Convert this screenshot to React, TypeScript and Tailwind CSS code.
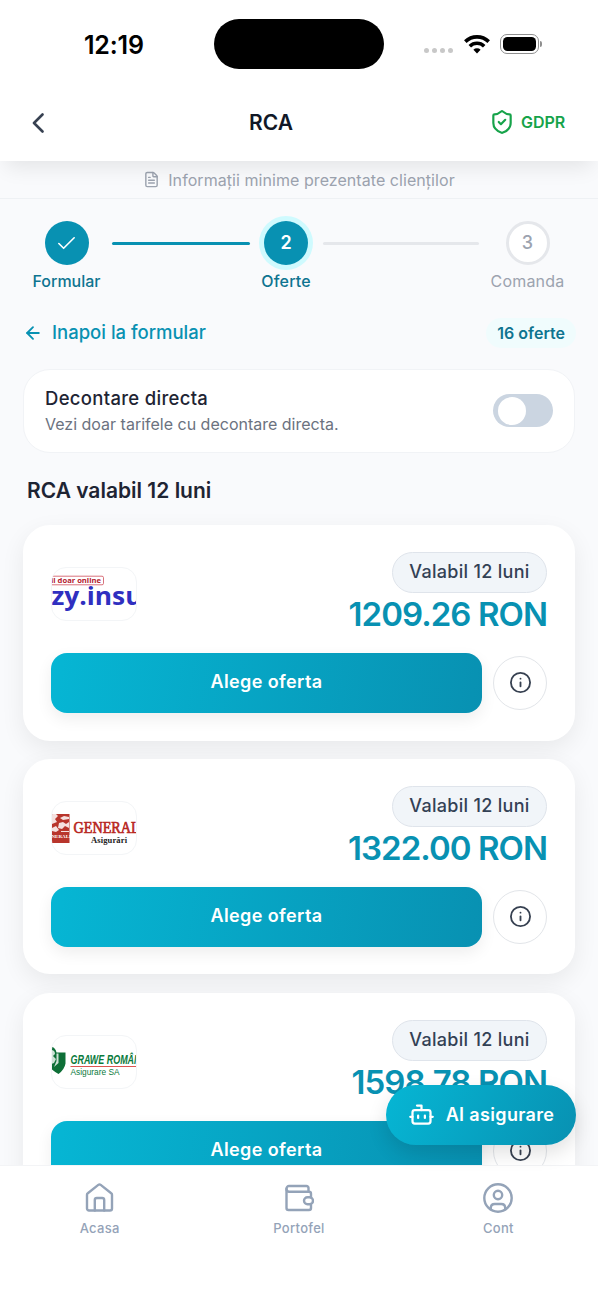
import type { ReactNode } from "react";
import { ArrowLeft, Bot, Check, FileText, Info, ShieldCheck } from "lucide-react";

type Offer = {
  id: string;
  price: string;
  logo: ReactNode;
};

function EazyLogo() {
  return (
    <svg viewBox="0 0 84 52" className="h-full w-full">
      <rect x="-20" y="8.200" width="71.500" height="8.600" rx="1.500" fill="#fff" stroke="#d4626c" strokeWidth="0.9" />
      <text x="-1" y="15.200" fontSize="7.400" fontWeight="700" fill="#b3202e" fontFamily="Open Sans, sans-serif" textLength="50" lengthAdjust="spacingAndGlyphs">
        il doar online
      </text>
      <text x="-0.500" y="37" fontSize="25" fontWeight="700" fill="#2f2fc0" fontFamily="Open Sans, sans-serif" textLength="91" lengthAdjust="spacingAndGlyphs">
        zy.insu
      </text>
    </svg>
  );
}

function GeneraliLogo() {
  return (
    <svg viewBox="0 0 84 52" className="h-full w-full">
      <rect x="0" y="12" width="17.500" height="29" fill="#b8352c" />
      <path
        d="M0 12h4l2 2-3 3 2 3-5 2zM8 16l4-2 5 1v2l-6 1zM7 21l4-1 3 2 3-2v6l-4-2-3 3-4-1zM0 26l4-2 3 4-3 2-4-1zM9 29h8v1H9z"
        fill="#fff"
        opacity="0.85"
      />
      <text x="-0.500" y="36" fontSize="5" fontWeight="700" fill="#fff" fontFamily="Liberation Serif, serif">
        NERALI
      </text>
      <text x="21.500" y="31" fontSize="17.500" fill="#b8271f" stroke="#b8271f" strokeWidth="0.7" fontFamily="Liberation Serif, serif" textLength="71" lengthAdjust="spacingAndGlyphs">
        GENERALI
      </text>
      <text x="39" y="41" fontSize="8.500" fontWeight="700" fill="#222" fontFamily="Liberation Serif, serif" textLength="36">
        Asigurări
      </text>
    </svg>
  );
}

function GraweLogo() {
  return (
    <svg viewBox="0 0 84 52" className="h-full w-full">
      <path d="M-2 11q5-1 6.500 5.500H13.500v11q-1 6-7 10.500-5-3-8-6z" fill="#0e6f37" />
      <path d="M-1 14q4 0 4 4l-2 2 3 3-2 4-3 1zM4.500 17.500V25l-2.500 6 4.500-4v-9.500z" fill="#fff" opacity="0.8" />
      <text x="18.500" y="28" fontSize="12" fontWeight="700" fontStyle="italic" fill="#0a7a3c" fontFamily="Liberation Sans, sans-serif" textLength="70" lengthAdjust="spacingAndGlyphs">
        GRAWE ROMÂN
      </text>
      <rect x="18.500" y="30" width="70" height="0.9" fill="#d8423e" />
      <text x="18.500" y="38.500" fontSize="9" fill="#0a7a3c" fontFamily="Liberation Sans, sans-serif" textLength="49" lengthAdjust="spacingAndGlyphs">
        Asigurare SA
      </text>
    </svg>
  );
}

const offers: Offer[] = [
  { id: "eazy", price: "1209.26 RON", logo: <EazyLogo /> },
  { id: "generali", price: "1322.00 RON", logo: <GeneraliLogo /> },
  { id: "grawe", price: "1598.78 RON", logo: <GraweLogo /> },
];

function StatusBar() {
  return (
    <div className="flex h-[84px] shrink-0 items-start">
      <div className="flex h-[90px] w-[214px] items-center pl-[84px]">
        <span className="text-[25px] leading-6 font-semibold tracking-[-0.2px] text-black">12:19</span>
      </div>
      <div className="mt-[19px] h-[50px] w-[170px] rounded-full bg-black" />
      <div className="flex h-[88px] items-center pl-10">
        <div className="mt-3 flex gap-[3px]">
          {[0, 1, 2, 3].map((dot) => (
            <span key={dot} className="size-[5px] rounded-full bg-[#c8c8c8]" />
          ))}
        </div>
        <svg viewBox="0 0 26 20" className="ml-[11px] h-5 w-[26px]" fill="none" stroke="#000" strokeWidth="3.600">
          <path d="M1.300 7.600a16.800 16.800 0 0 1 23.400 0" />
          <path d="M5.800 12.200a10.400 10.400 0 0 1 14.400 0" />
          <path d="M13 19.500l-3.600-3.700a5.200 5.200 0 0 1 7.200 0z" fill="#000" stroke="none" />
        </svg>
        <div className="ml-[10px] h-[20px] w-[39px] rounded-[7px] border border-[#8f8f8f] p-[2px]">
          <div className="h-full w-full rounded-[4.500px] bg-black" />
        </div>
        <span className="ml-px h-[6px] w-[2px] rounded-r-full bg-[#8f8f8f]" />
      </div>
    </div>
  );
}

function Header() {
  return (
    <header className="relative z-10 shrink-0 bg-white shadow-[0_12px_20px_-6px_rgba(0,0,0,0.09)]">
      <StatusBar />
      <div className="flex h-[77px] items-center justify-between pr-[33px] pl-[32px]">
        <button type="button" className="flex w-[35px]" aria-label="Inapoi">
          <svg viewBox="0 0 13 20" className="h-5 w-[13px]" fill="none" stroke="#374151" strokeWidth="2.600" strokeLinecap="round" strokeLinejoin="round">
            <path d="M10.500 1.500 2 10l8.500 8.500" />
          </svg>
        </button>
        <h1 className="text-[21px] font-semibold text-[#111827]">RCA</h1>
        <div className="flex w-[90px] items-center justify-end gap-1.5 pb-px text-[#16a34a]">
          <ShieldCheck size={26} strokeWidth={2} />
          <span className="text-[16px] font-semibold tracking-[-0.100px]">GDPR</span>
        </div>
      </div>
    </header>
  );
}

function Stepper() {
  return (
    <div className="flex items-start gap-[11.500px] px-[33px] pt-[22px]">
      <div className="flex w-[67px] flex-col items-center gap-[4px]">
        <div className="flex size-[44px] items-center justify-center rounded-full bg-[#0891b2] text-white">
          <Check size={23} strokeWidth={1.700} />
        </div>
        <span className="text-[16px] leading-6 font-medium text-[#0e7490]">Formular</span>
      </div>
      <div className="mt-[21px] h-[3px] flex-[139] rounded-full bg-[#0891b2]" />
      <div className="flex w-[50px] flex-col items-center gap-[4px]">
        <div className="flex size-[44px] items-center justify-center rounded-full bg-[#0891b2] pb-px text-[18px] font-semibold text-white ring-[5px] ring-[#cffafe]">
          2
        </div>
        <span className="text-[16px] leading-6 font-medium tracking-[0.200px] text-[#0e7490]">Oferte</span>
      </div>
      <div className="mt-[21px] h-[3px] flex-[157] rounded-full bg-[#e5e7eb]" />
      <div className="flex w-[75px] flex-col items-center gap-[4px]">
        <div className="flex size-[44px] items-center justify-center rounded-full border-[3px] border-[#e5e7eb] bg-white pb-px text-[18px] font-medium text-[#9ca3af]">
          3
        </div>
        <span className="text-[16px] leading-6 tracking-[0.200px] text-[#9ca3af]">Comanda</span>
      </div>
    </div>
  );
}

function OfferCard({ offer }: { offer: Offer }) {
  return (
    <article className="h-[215.500px] shrink-0 rounded-[27px] bg-white px-[28px] pt-[27px] shadow-[0_8px_24px_rgba(0,0,0,0.07)]">
      <div className="flex h-[101px] items-start justify-between">
        <div className="mt-[15px] h-[54px] w-[86px] overflow-hidden rounded-[15px] border border-[#f3f5f7] bg-white">
          {offer.logo}
        </div>
        <div className="flex flex-col items-end">
          <span className="flex h-[41px] w-[155px] items-center justify-center rounded-full border border-[#dfe4eb] bg-[#f1f5f9] pb-[2px] text-[18px] font-medium tracking-[0.300px] whitespace-nowrap text-[#334155]">
            Valabil 12 luni
          </span>
          <span className="text-[33px] leading-[42px] font-semibold tracking-[-0.950px] whitespace-nowrap text-[#0891b2]">
            {offer.price}
          </span>
        </div>
      </div>
      <div className="flex items-center gap-[11px]">
        <button
          type="button"
          className="h-[60px] flex-1 rounded-2xl bg-linear-[98deg] from-[#06b6d4] to-[#0891b2] pb-[3px] text-[18px] font-semibold tracking-[0.400px] text-white shadow-[0_6px_16px_rgba(0,0,0,0.07)]"
        >
          Alege oferta
        </button>
        <button type="button" aria-label="Detalii" className="flex size-[54px] items-center justify-center rounded-full border border-[#e2e5e9] bg-white pb-px text-[#374151]">
          <Info size={23} strokeWidth={1.900} />
        </button>
      </div>
    </article>
  );
}

const tabs = [
  {
    label: "Acasa",
    icon: (
      <>
        <path d="M2 11.800a2 2 0 0 1 .8-1.600l10.500-8.300a2 2 0 0 1 2.400 0l10.500 8.300a2 2 0 0 1 .8 1.600V25.500a2 2 0 0 1-2 2h-21a2 2 0 0 1-2-2z" />
        <path d="M9.800 27.500V17a2 2 0 0 1 2-2h5.400a2 2 0 0 1 2 2v10.500" />
      </>
    ),
  },
  {
    label: "Portofel",
    icon: (
      <>
        <path d="M24.500 8.500V5a2 2 0 0 0-2-2H5a2.500 2.500 0 0 0-2.500 2.500V25a2 2 0 0 0 2 2h20.500a2 2 0 0 0 2-2v-3.500" />
        <path d="M2.500 6a2.500 2.500 0 0 0 2.500 2.700h20a2 2 0 0 1 2 2v3.500" />
        <rect x="20" y="14.300" width="9" height="7" rx="3.500" />
      </>
    ),
  },
  {
    label: "Cont",
    icon: (
      <>
        <circle cx="15" cy="15" r="13.700" />
        <circle cx="15" cy="12" r="4.200" />
        <path d="M7.800 26v-1c0-2.500 1.500-4 4-4h6.400c2.500 0 4 1.500 4 4v1" />
      </>
    ),
  },
];

function TabBar() {
  return (
    <nav className="relative flex h-[135px] shrink-0 border-t border-[#f3f4f6] bg-white">
      {tabs.map((tab) => (
        <div key={tab.label} className="flex flex-1 flex-col items-center pt-[17px] text-[#94a3b8]">
          <svg viewBox="0 0 30 30" className="size-[30px]" fill="none" stroke="currentColor" strokeWidth="2.400" strokeLinecap="round" strokeLinejoin="round">
            {tab.icon}
          </svg>
          <span className="mt-[5px] text-[13px] leading-5 font-medium tracking-[0.300px]">{tab.label}</span>
        </div>
      ))}
    </nav>
  );
}

export default function App() {
  return (
    <div className="relative flex h-[1300px] w-[598px] flex-col overflow-hidden bg-[#f9fafc] font-['Inter','Liberation_Sans',sans-serif]">
      <Header />
      <main className="min-h-0 flex-1 overflow-hidden">
        <div className="flex h-[38px] items-center justify-center gap-2 border-b border-[#eef1f4] text-[#9ca3af]">
          <FileText size={17} strokeWidth={2} />
          <span className="text-[16px] tracking-[0.060px] whitespace-nowrap">Informații minime prezentate clienților</span>
        </div>
        <Stepper />
        <div className="mt-[18px] flex h-[44px] items-center justify-between pr-[22px] pl-[23px]">
          <button type="button" className="flex items-center gap-[9px] text-[18.500px] font-medium whitespace-nowrap text-[#0891b2]">
            <ArrowLeft size={20} strokeWidth={2.200} />
            Inapoi la formular
          </button>
          <span className="rounded-full bg-[#f0fcfd] px-[11px] py-[3px] text-[16px] font-semibold whitespace-nowrap text-[#0e7490]">
            16 oferte
          </span>
        </div>
        <section className="mx-[23px] mt-[14px] flex h-[84px] items-center justify-between rounded-[27px] border border-[#f1f3f6] bg-white px-[21px] pb-px">
          <div>
            <p className="text-[18.500px] leading-[27px] font-medium tracking-[0.300px] text-[#1e2433]">Decontare directa</p>
            <p className="text-[16px] leading-6 whitespace-nowrap text-[#6b7280]">Vezi doar tarifele cu decontare directa.</p>
          </div>
          <div className="flex h-[33px] w-[60px] items-center rounded-full bg-[#cbd5e1] pl-[5px]">
            <span className="size-[28px] rounded-full bg-white" />
          </div>
        </section>
        <h2 className="mt-[21px] ml-[27px] text-[21px] leading-[34px] font-semibold text-[#1e2433]">RCA valabil 12 luni</h2>
        <div className="mt-[17px] flex flex-col gap-[18.250px] px-[23px]">
          {offers.map((offer) => (
            <OfferCard key={offer.id} offer={offer} />
          ))}
        </div>
      </main>
      <TabBar />
      <button
        type="button"
        className="absolute top-[1085px] right-[22px] flex h-[60px] w-[190px] items-center justify-center gap-[11px] rounded-full bg-linear-[115deg] from-[#06b6d4] to-[#0891b2] pb-[2px] text-[18px] font-semibold tracking-[0.350px] whitespace-nowrap text-white shadow-[0_8px_20px_rgba(0,0,0,0.12)]"
      >
        <Bot size={27} strokeWidth={2} />
        AI asigurare
      </button>
    </div>
  );
}
